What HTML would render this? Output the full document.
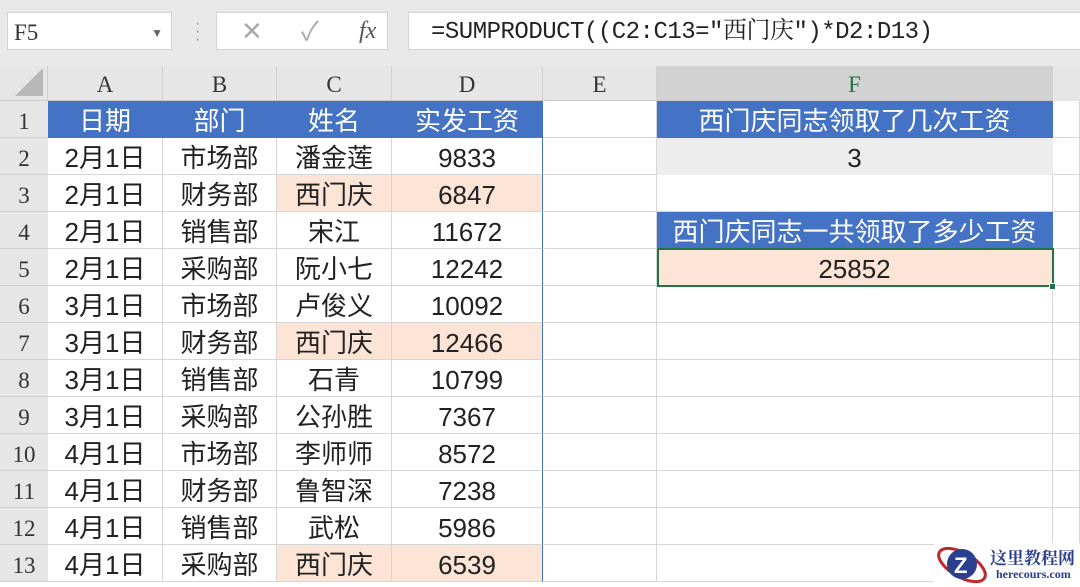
<!DOCTYPE html><html><head><meta charset="utf-8"><style>
*{margin:0;padding:0;box-sizing:border-box}
body{width:1080px;height:585px;overflow:hidden;background:#fff;font-family:"Liberation Sans","Noto Sans CJK SC",sans-serif;position:relative}
.top{position:absolute;left:0;top:0;width:1080px;height:66px;background:#e9e9e9}
.box{position:absolute;background:#fff;border:1px solid #d4d4d4;top:12px;height:38px}
.ser{font-family:"Liberation Serif","Noto Serif CJK SC",serif}
.ch{position:absolute;top:66px;height:35px;background:#e6e6e6;border-right:1px solid #d0d0d0;border-bottom:1px solid #c8c8c8;text-align:center;line-height:38px;font-size:23px;color:#333;font-family:"Liberation Serif",serif}
.rh{position:absolute;left:0;width:48px;height:37px;background:#e6e6e6;border-bottom:1px solid #d0d0d0;text-align:center;line-height:42px;font-size:23px;color:#333;font-family:"Liberation Serif",serif}
.c{position:absolute;height:37px;text-align:center;line-height:40px;font-size:26px;color:#222;border-right:1px solid #d6d6d6;border-bottom:1px solid #d6d6d6;font-family:"Liberation Sans","Noto Sans CJK SC",sans-serif;white-space:nowrap}
.h{background:#4472c4;color:#fff;border-color:#4472c4}
.p{background:#fce4d6}
</style></head><body>
<div class="top"></div>
<div class="box ser" style="left:7px;width:165px;font-size:23px;line-height:40px;padding-left:6px;color:#333">F5<span style="position:absolute;right:8px;top:0;font-size:12px;color:#666">▼</span></div>
<div style="position:absolute;left:195px;top:20px;color:#999;font-size:16px;line-height:8px">·<br>·<br>·</div>
<div class="box" style="left:216px;width:172px;color:#aaa;font-size:26px;line-height:36px"><span style="position:absolute;left:24px">✕</span><span style="position:absolute;left:84px">✓</span><span class="ser" style="position:absolute;left:142px;font-style:italic;color:#555;font-size:24px">fx</span></div>
<div class="box" style="left:408px;width:690px;font-size:24px;line-height:40px;padding-left:22px;color:#222;font-family:'Liberation Mono','Noto Serif CJK SC',monospace;letter-spacing:-0.5px">=SUMPRODUCT((C2:C13="西门庆")*D2:D13)</div>
<div class="ch" style="left:0;width:48px;background:#e6e6e6"><div style="position:absolute;right:4px;bottom:4px;width:0;height:0;border-left:28px solid transparent;border-bottom:28px solid #b8b8b8"></div></div>
<div class="ch" style="left:48px;width:115px">A</div>
<div class="ch" style="left:163px;width:114px">B</div>
<div class="ch" style="left:277px;width:115px">C</div>
<div class="ch" style="left:392px;width:151px">D</div>
<div class="ch" style="left:543px;width:114px">E</div>
<div class="ch" style="left:657px;width:396px;background:#d2d2d2;color:#217346">F</div>
<div class="ch" style="left:1053px;width:27px;border:none"></div>
<div id="g"></div>
<div style="position:absolute;left:657px;top:248px;width:397px;height:39px;border:2px solid #217346"></div>
<div style="position:absolute;left:1049px;top:283px;width:7px;height:7px;background:#217346;border:1px solid #fff"></div>
<div style="position:absolute;left:934px;top:543px;width:146px;height:42px;background:#fff">
<svg width="56" height="42" style="position:absolute;left:0;top:0"><ellipse cx="28" cy="22" rx="26" ry="12" fill="none" stroke="#c0282d" stroke-width="3" transform="rotate(30 28 22)"/><circle cx="28" cy="21" r="15" fill="#2a3f8f"/><text x="20" y="30" fill="#fff" font-size="22" font-weight="bold" font-family="Liberation Sans">Z</text></svg>
<div style="position:absolute;left:56px;top:1px;font-size:17px;font-weight:bold;color:#2a3f8f;font-family:'Noto Serif CJK SC',serif">这里教程网</div>
<div style="position:absolute;left:62px;top:24px;font-size:12px;font-weight:bold;color:#2a3f8f;font-family:'Liberation Serif',serif">herecours.com</div></div>
<script>
var d=[["日期","部门","姓名","实发工资"],["2月1日","市场部","潘金莲","9833"],["2月1日","财务部","西门庆","6847"],["2月1日","销售部","宋江","11672"],["2月1日","采购部","阮小七","12242"],["3月1日","市场部","卢俊义","10092"],["3月1日","财务部","西门庆","12466"],["3月1日","销售部","石青","10799"],["3月1日","采购部","公孙胜","7367"],["4月1日","市场部","李师师","8572"],["4月1日","财务部","鲁智深","7238"],["4月1日","销售部","武松","5986"],["4月1日","采购部","西门庆","6539"]];
var X=[48,163,277,392,543,657,1053,1080],h="";
for(var r=0;r<13;r++){var y=101+r*37;h+='<div class="rh" style="top:'+y+'px">'+(r+1)+'</div>';
var pk=d[r][2]=="西门庆";
for(var c=0;c<7;c++){var cl="c",t="";
if(c<4){t=d[r][c];if(r==0)cl+=" h";else if(pk&&c>=2)cl+=" p";}
if(c==3&&r>0)cl+='" style="border-right:1px solid #4472c4;';
if(c==5){if(r==0){cl+=" h";t="西门庆同志领取了几次工资"}if(r==1){t="3";cl+='" style="background:#ededed;border-color:#ededed;'}if(r==3){cl+=" h";t="西门庆同志一共领取了多少工资"}if(r==4){cl+=" p";t="25852"}}
var st='left:'+X[c]+'px;top:'+y+'px;width:'+(X[c+1]-X[c])+'px';
if(cl.indexOf('style="')>0){h+='<div class="'+cl+st+'">'+t+'</div>'}else h+='<div class="'+cl+'" style="'+st+'">'+t+'</div>';}}
document.getElementById("g").innerHTML=h;
</script>
</body></html>
